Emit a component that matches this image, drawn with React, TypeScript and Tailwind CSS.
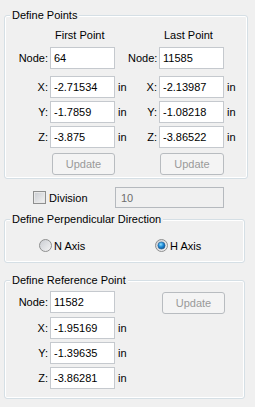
import React from "react";

const Field = ({ value, className = "", disabled = false }: { value: string; className?: string; disabled?: boolean }) => (
  <input
    readOnly
    value={value}
    className={
      disabled
        ? `h-[21px] border border-[#b5b9be] bg-[#f0f0f0] pl-[5px] text-[#6d6d6d] outline-none ${className}`
        : `h-[22px] w-[65px] border border-[#c5c9ce] bg-white pl-[3px] text-black outline-none ${className}`
    }
  />
);

const UpdateButton = ({ className = "" }: { className?: string }) => (
  <button
    disabled
    className={`h-[22px] rounded-[3px] border border-[#b8bcc0] bg-[#f4f4f4] text-[#9a9a9a] ${className}`}
  >
    Update
  </button>
);

const CoordRow = ({
  label,
  a,
  b,
  unit = true,
  className = "",
}: {
  label: string;
  a: string;
  b?: string;
  unit?: boolean;
  className?: string;
}) => (
  <div className={`flex h-[22px] items-center ${className}`}>
    <span className="w-[43px] text-right">{label}</span>
    <Field value={a} className="ml-[2px]" />
    <span className="ml-[3px] w-[10px]">{unit ? "in" : ""}</span>
    {b !== undefined && (
      <>
        <span className="w-[29px] text-right">{label}</span>
        <Field value={b} className="ml-[2px]" />
        <span className="ml-[3px]">{unit ? "in" : ""}</span>
      </>
    )}
  </div>
);

const Radio = ({ checked = false }: { checked?: boolean }) => (
  <svg width="13" height="13" viewBox="0 0 13 13">
    <defs>
      <linearGradient id="rb" x1="0" y1="0" x2="1" y2="1">
        <stop offset="0" stopColor="#c9ccd1" />
        <stop offset="1" stopColor="#f5f5f5" />
      </linearGradient>
      <radialGradient id="rdot" cx="0.4" cy="0.35" r="0.7">
        <stop offset="0" stopColor="#8fe0ff" />
        <stop offset="0.5" stopColor="#1c8ad8" />
        <stop offset="1" stopColor="#0b4f8f" />
      </radialGradient>
    </defs>
    <circle cx="6.5" cy="6.5" r="6" fill="url(#rb)" stroke="#8e8f8f" />
    {checked && <circle cx="6.5" cy="6.5" r="3.6" fill="url(#rdot)" stroke="#2d5f8f" strokeWidth="0.6" />}
  </svg>
);

const Group = ({
  title,
  className = "",
  children,
}: {
  title: string;
  className?: string;
  children: React.ReactNode;
}) => (
  <fieldset
    className={`ml-[4px] rounded-[3px] border border-[#d5dfe5] shadow-[inset_0_0_0_1px_#ffffff] ${className}`}
  >
    <legend className="ml-[5px] bg-[#f0f0f0] px-[2px] leading-[14px]">{title}</legend>
    {children}
  </fieldset>
);

export default function App() {
  return (
    <div className="flex h-[407px] w-[255px] flex-col bg-[#f0f0f0] pt-[8px] font-['Liberation_Sans',Arial,sans-serif] text-[11px] leading-[14px] text-black">
      <Group title="Define Points" className="w-[244px] pb-[3px]">
        <div className="mt-[6px] flex">
          <span className="ml-[50px] w-[109px]">First Point</span>
          <span>Last Point</span>
        </div>
        <CoordRow label="Node:" a="64" b="11585" unit={false} className="mt-[5px]" />
        <CoordRow label="X:" a="-2.71534" b="-2.13987" className="mt-[7px]" />
        <CoordRow label="Y:" a="-1.7859" b="-1.08218" className="mt-[3px]" />
        <CoordRow label="Z:" a="-3.875" b="-3.86522" className="mt-[3px]" />
        <div className="mt-[5px] flex">
          <UpdateButton className="ml-[47px] w-[63px]" />
          <UpdateButton className="ml-[45px] w-[64px]" />
        </div>
      </Group>

      <div className="mt-[8px] flex h-[21px] items-center">
        <span className="ml-[33px] h-[13px] w-[13px] border border-[#8e8f8f] bg-gradient-to-br from-[#c9ccd1] to-[#f4f4f4] shadow-[inset_0_0_0_1px_#e8e8e8]" />
        <span className="ml-[3px] w-[66px]">Division</span>
        <Field value="10" disabled className="w-[109px]" />
      </div>

      <Group title="Define Perpendicular Direction" className="mt-[4px] w-[241px] pb-[10px]">
        <div className="mt-[13px] flex h-[13px] items-center">
          <span className="ml-[34px] flex">
            <Radio />
          </span>
          <span className="ml-[2px] w-[101px]">N Axis</span>
          <Radio checked />
          <span className="ml-[2px]">H Axis</span>
        </div>
      </Group>

      <Group title="Define Reference Point" className="mt-[10px] w-[241px] pb-[9px]">
        <div className="mt-[4px] flex items-start">
          <CoordRow label="Node:" a="11582" unit={false} />
          <UpdateButton className="ml-[34px] mt-[1px] h-[21px] w-[63px]" />
        </div>
        <CoordRow label="X:" a="-1.95169" className="mt-[3px]" />
        <CoordRow label="Y:" a="-1.39635" className="mt-[3px]" />
        <CoordRow label="Z:" a="-3.86281" className="mt-[3px]" />
      </Group>
    </div>
  );
}
